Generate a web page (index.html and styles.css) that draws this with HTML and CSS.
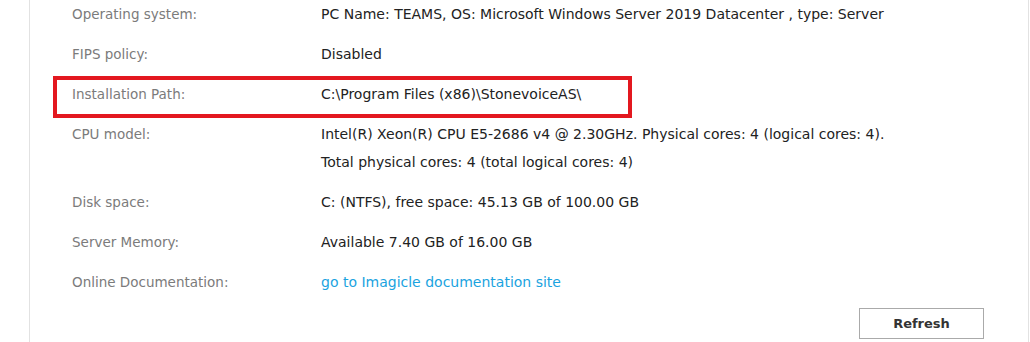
FILE: index.html
```html
<!DOCTYPE html>
<html>
<head>
<meta charset="utf-8">
<link rel="stylesheet" href="styles.css">
</head>
<body>
<div class="panel">
  <div class="rows">
    <div class="row"><div class="label">Operating system:</div><div class="value"><div>PC Name: TEAMS, OS: Microsoft Windows Server 2019 Datacenter , type: Server</div></div></div>
    <div class="row"><div class="label">FIPS policy:</div><div class="value"><div>Disabled</div></div></div>
    <div class="row"><div class="label">Installation Path:</div><div class="value"><div>C:\Program Files (x86)\StonevoiceAS\</div></div><div class="highlight"></div></div>
    <div class="row"><div class="label">CPU model:</div><div class="value"><div>Intel(R) Xeon(R) CPU E5-2686 v4 @ 2.30GHz. Physical cores: 4 (logical cores: 4).</div><div>Total physical cores: 4 (total logical cores: 4)</div></div></div>
    <div class="row"><div class="label">Disk space:</div><div class="value"><div>C: (NTFS), free space: 45.13 GB of 100.00 GB</div></div></div>
    <div class="row"><div class="label">Server Memory:</div><div class="value"><div>Available 7.40 GB of 16.00 GB</div></div></div>
    <div class="row"><div class="label">Online Documentation:</div><div class="value"><div><a class="link" href="#">go to Imagicle documentation site</a></div></div></div>
  </div>
  <div class="actions"><button class="btn">Refresh</button></div>
</div>
</body>
</html>
```
FILE: styles.css
```css
html, body { margin: 0; padding: 0; background: #fff; }
body { font-family: "DejaVu Sans", Verdana, sans-serif; font-size: 14px; color: #222; overflow: hidden; }
.panel {
  margin-left: 29px;
  width: 1000px;
  height: 342px;
  border-left: 1px solid #e2e2e2;
  border-right: 1px solid #e2e2e2;
  box-sizing: border-box;
  position: relative;
}
.row {
  display: flex;
  position: relative;
  padding: 0 0 12px 0;
}
.label {
  width: 249px;
  padding-left: 42px;
  color: #7b7b7b;
  line-height: 28px;
  flex: none;
  font-size: 13.5px;
}
.value { line-height: 28px; }
.link { color: #1aa3e0; text-decoration: none; }
.highlight {
  position: absolute;
  left: 23px;
  top: -4px;
  width: 579px;
  height: 42px;
  border: 4px solid #e3181f;
  box-sizing: border-box;
}
.actions { display: flex; justify-content: flex-end; padding-right: 44px; }
.btn {
  width: 125px;
  height: 31px;
  background: #fff;
  border: 1px solid #aaa;
  font-family: "DejaVu Sans", Verdana, sans-serif;
  font-weight: bold;
  font-size: 13px;
  color: #333;
  margin-top: 0;
}
```
